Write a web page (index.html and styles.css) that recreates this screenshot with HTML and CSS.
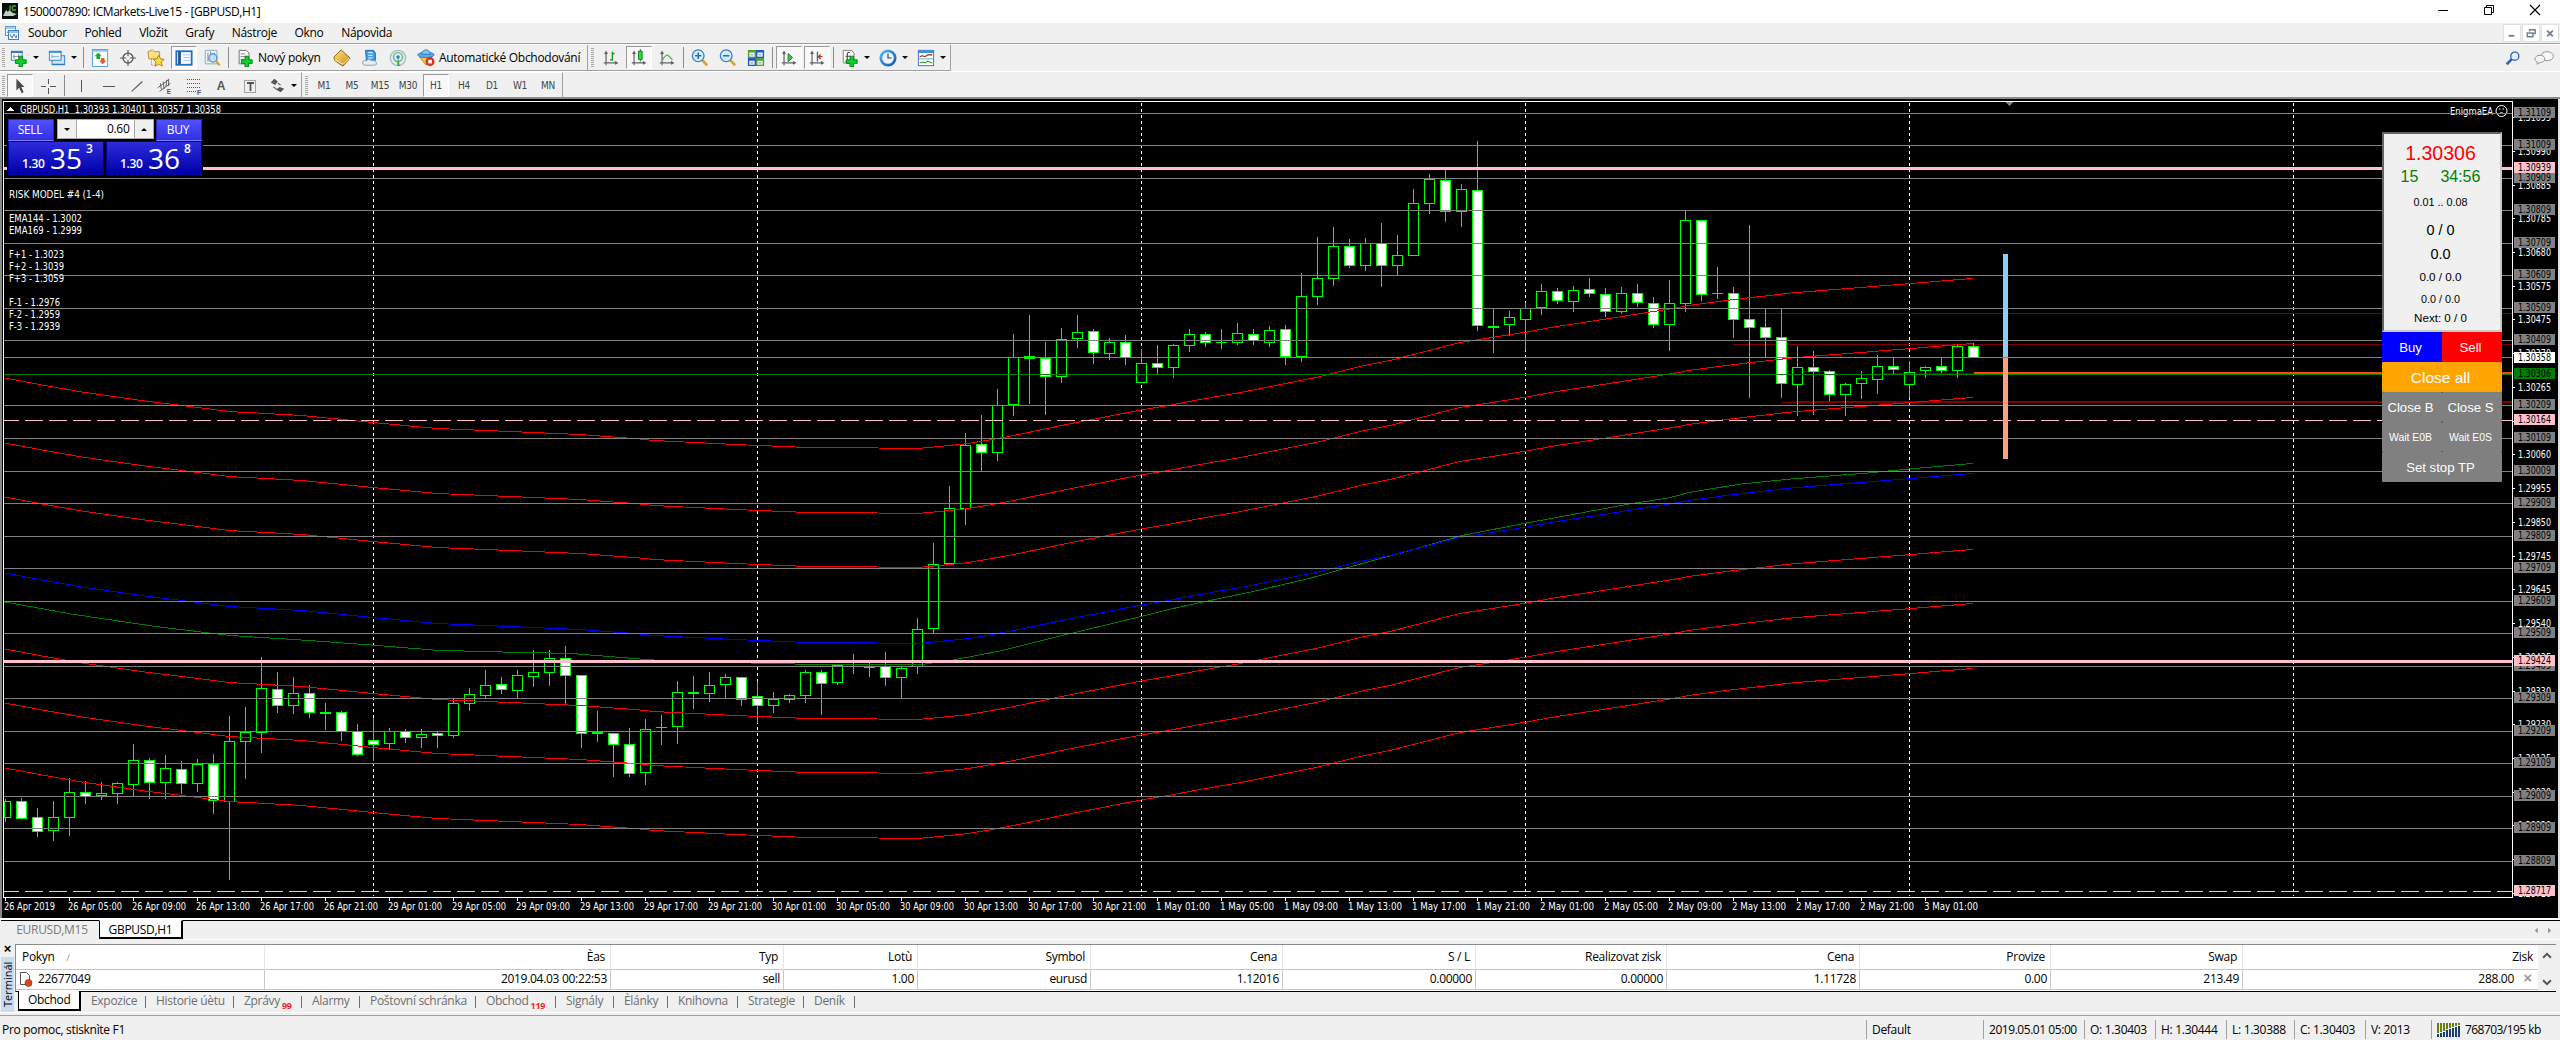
FILE: index.html
```html
<!DOCTYPE html>
<html lang="cs">
<head>
    <meta charset="UTF-8">
    <title>1500007890: ICMarkets-Live15 - [GBPUSD,H1]</title>
    <link rel="stylesheet" href="styles.css">
</head>
<body>
<svg class="defs">
    <defs>
        <linearGradient id="gold" x1="0" y1="0" x2="1" y2="1"><stop offset="0" stop-color="#ffe680"/><stop offset="1" stop-color="#c98a10"/></linearGradient>
        <linearGradient id="blue" x1="0" y1="0" x2="1" y2="1"><stop offset="0" stop-color="#5ab4f5"/><stop offset="1" stop-color="#0a55b0"/></linearGradient>
        <g id="plus"><path d="M10 8h4v4h4v4h-4v4h-4v-4H6v-4h4z" fill="#0bd02c" stroke="#067a18"/></g>
        <g id="axes"><path d="M4.500 3v15M2 15.500h15M3 5.500l1.500-2.500 1.500 2.500M14.500 14l2.500 1.500-2.500 1.500" fill="none" stroke="#606060" stroke-width="1.300"/></g>
    </defs>
</svg>

<div class="title-bar">
    <svg class="app-icon" viewBox="0 0 16 16"><rect width="16" height="16" fill="#0b0f0b"/><path d="M1 13l3-6 2 2 1-2 4 3 4 1-4 2z" fill="#c5cbc5"/><path d="M8 2.500v5M14 3h-3l-1 2 1 2h3" fill="none" stroke="#4e9a2e" stroke-width="1.500"/></svg>
    <span class="caption">1500007890: ICMarkets-Live15 - [GBPUSD,H1]</span>
    <div class="win-btns">
        <svg viewBox="0 0 46 22"><path d="M18 10.500h10" stroke="#000"/></svg>
        <svg viewBox="0 0 46 22"><path d="M18.500 7.500h7v7h-7zM20.500 7.500v-2h7v7h-2" fill="none" stroke="#000"/></svg>
        <svg viewBox="0 0 46 22"><path d="M18 5l10 10M28 5l-10 10" stroke="#000" stroke-width="1.200"/></svg>
    </div>
</div>

<div class="menu-bar">
    <svg class="menu-icon" viewBox="0 0 16 16"><rect x="1.500" y="1.500" width="10" height="9" fill="#fff" stroke="#5b9bd5"/><path d="M1 3h11M3 8l2-3 2 3" stroke="#5b9bd5" fill="none"/><rect x="4.500" y="5.500" width="10" height="9" fill="#fff" stroke="#3c7fd0"/><path d="M4 7h11M6 9l2 4 2-4 2 4 1-3" stroke="#3c7fd0" fill="none"/></svg>
    <span>Soubor</span><span>Pohled</span><span>Vložit</span><span>Grafy</span><span>Nástroje</span><span>Okno</span><span>Nápovìda</span>
    <div class="mdi-btns">
        <svg viewBox="0 0 17 17"><path d="M5 11.500h6" stroke="#6f8196" stroke-width="2"/></svg>
        <svg viewBox="0 0 17 17"><path d="M4.500 8.500h6v4h-6zM7 7V5h6v4h-2" fill="none" stroke="#6f8196" stroke-width="1.500"/></svg>
        <svg viewBox="0 0 17 17"><path d="M5.500 6l6 6M11.500 6l-6 6" stroke="#6f8196" stroke-width="2"/></svg>
    </div>
</div>

<div class="toolbar">
    <div class="tool-group">
        <i class="grip"></i>
        <span class="tool"><svg viewBox="0 0 20 20"><rect x="1.500" y="2.500" width="12" height="10" fill="#fff" stroke="#2b7bc8"/><path d="M1 3.500h13" stroke="#2b7bc8" stroke-width="2"/><path d="M4.500 6v5M3 8.500h8M9.500 6v5" stroke="#888"/><use href="#plus"/></svg></span><i class="drop"></i>
        <span class="tool"><svg viewBox="0 0 20 20"><rect x="4.500" y="7.500" width="14" height="10" fill="#cfe6fa" stroke="#2b7bc8"/><rect x="1.500" y="2.500" width="13" height="10" fill="#eef6fd" stroke="#2b7bc8"/><path d="M1 3.500h14M5 17h13" stroke="#2b7bc8" stroke-width="1.500"/><path d="M4.500 6v4M4 8.500h8" stroke="#7ab"/></svg></span><i class="drop"></i>
        <i class="sep"></i>
        <span class="tool"><svg viewBox="0 0 20 20"><rect x="1.500" y=".5" width="17" height="19" fill="#fff" stroke="#4d9be0"/><path d="M2 2h16" stroke="#8cc3f0" stroke-width="2"/><path d="M8 4l4 4h-2v3H6V8H4z" fill="#1fae2c"/><path d="M13 17l-4-4h2v-3h4v3h2z" fill="#ef5a2a"/></svg></span>
        <span class="tool"><svg viewBox="0 0 20 20"><circle cx="10" cy="10" r="5.500" fill="none" stroke="#5a5a5a" stroke-width="1.500"/><path d="M10 1v7M10 12v7M1 10h7M12 10h7" stroke="#5a5a5a" stroke-width="1.200"/></svg></span>
        <span class="tool"><svg viewBox="0 0 20 20"><path d="M1 3l5-2 2 2h6v8H2z" fill="#f8e08a" stroke="#b98d20"/><path d="M5 11v7h5" stroke="#777" fill="none" stroke-dasharray="1 1"/><path d="M13 7l2 4 4 .5-3 3 1 4.500-4-2-4 2 1-4.500-3-3 4-.5z" fill="#ffdc3c" stroke="#b07a10"/></svg></span>
        <span class="tool on"><svg viewBox="0 0 20 20"><rect x="1.500" y="2.500" width="17" height="15" fill="#fff" stroke="#1d6fc0" stroke-width="2"/><path d="M5 3v14" stroke="#1d4f90" stroke-width="3"/><path d="M9 6.500h8M9 9.500h8M9 12.500h8" stroke="#9bf"/></svg></span>
        <span class="tool"><svg viewBox="0 0 20 20"><path d="M2.500 1.500h13v15h-13z" fill="#eef5fb" stroke="#7fa6c8"/><path d="M5.500 4v10M8.500 3v9M12.500 4v8" stroke="#6f7f8f"/><circle cx="11" cy="10" r="4.500" fill="#bfe0fa" fill-opacity=".8" stroke="#4d8fcc" stroke-width="1.400"/><path d="M14.500 13.500l4 4.500" stroke="#d9a62a" stroke-width="2.500"/></svg></span>
        <i class="sep"></i>
        <span class="tool wide new-order"><svg viewBox="0 0 20 20"><path d="M3.500 1.500h8l3 3v12h-11z" fill="#fff" stroke="#666"/><path d="M5 5.500h5M5 8.500h7M5 11.500h4" stroke="#777"/><use href="#plus"/></svg><b>Nový pokyn</b></span>
        <span class="tool"><svg viewBox="0 0 20 20"><path d="M1 9l8-8 10 9-8 9-9-6z" fill="url(#gold)" stroke="#8a5a08"/><path d="M2 12l9 5 7-7" stroke="#fff3c0" fill="none"/></svg></span>
        <span class="tool"><svg viewBox="0 0 20 20"><path d="M5 1.500h9l2 3v8H6z" fill="#3a9ff0" stroke="#1267b8"/><path d="M8 4h5M8 7h5M8 10h5" stroke="#fff"/><path d="M4 18q-3-1-2-4 2-2 4-1 3-3 6 0 4-1 5 2 1 3-2 3z" fill="#e7eef6" stroke="#7f96b5"/></svg></span>
        <span class="tool"><svg viewBox="0 0 20 20"><circle cx="10" cy="10" r="8.500" fill="#e3efe6" stroke="#9cc0cc" stroke-width="1.500"/><circle cx="10" cy="9" r="5" fill="none" stroke="#6fae8c" stroke-width="1.500"/><path d="M10 9l2 10H9z" fill="#2fae3c"/><circle cx="10" cy="9" r="2" fill="#3a7fd0"/></svg></span>
        <span class="tool wide auto"><svg viewBox="0 0 20 20"><path d="M3 9l7 9 6-3V8z" fill="#f2c64a" stroke="#b8860b"/><ellipse cx="10" cy="6.500" rx="9" ry="3" fill="#59ade8" stroke="#2a78b8"/><path d="M5 6q1-5 5-5t5 5z" fill="#7cc4f2" stroke="#2a78b8"/><circle cx="14.500" cy="14" r="5" fill="#d9301a"/><rect x="12.500" y="12" width="4" height="4" fill="#fff"/></svg><b>Automatické Obchodování</b></span>
    </div>
    <div class="tool-group">
        <i class="grip"></i>
        <span class="tool"><svg viewBox="0 0 20 20"><use href="#axes"/><path d="M11.500 3v10M9 12h2.500M11.500 5H14" stroke="#149a20" stroke-width="1.500"/></svg></span>
        <span class="tool on"><svg viewBox="0 0 20 20"><use href="#axes"/><path d="M11.500 0v14" stroke="#0a7a14"/><rect x="9.500" y="2.500" width="4" height="9" fill="#35d845" stroke="#0a7a14"/></svg></span>
        <span class="tool"><svg viewBox="0 0 20 20"><use href="#axes"/><path d="M5 12q4-6 6-5t5 5" fill="none" stroke="#4fb05a" stroke-width="1.500"/></svg></span>
        <i class="sep"></i>
        <span class="tool"><svg viewBox="0 0 20 20"><path d="M12 12l6 6" stroke="#d9a62a" stroke-width="3"/><circle cx="8" cy="7.500" r="6.500" fill="#d6edfc" stroke="#3484cc" stroke-width="1.500"/><path d="M4.500 7.500h7M8 4v7" stroke="#2a6fb8" stroke-width="1.800"/></svg></span>
        <span class="tool"><svg viewBox="0 0 20 20"><path d="M12 12l6 6" stroke="#d9a62a" stroke-width="3"/><circle cx="8" cy="7.500" r="6.500" fill="#d6edfc" stroke="#3484cc" stroke-width="1.500"/><path d="M4.500 7.500h7" stroke="#2a6fb8" stroke-width="1.800"/></svg></span>
        <span class="tool"><svg viewBox="0 0 20 20"><path d="M1 1h9v9H1zM10 10h9v9h-9z" fill="#4aa52a"/><path d="M10 1h9v9h-9zM1 10h9v9H1z" fill="#2557c8"/><path d="M2.500 4h6v4.500h-6zM11.500 4h6v4.500h-6zM2.500 13h6v4.500h-6zM11.500 13h6v4.500h-6z" fill="#e9f2ff"/><path d="M4 6.500h3M13 6.500h3M4 15.500h3M13 15.500h3" stroke="#88a"/></svg></span>
        <i class="sep"></i>
        <span class="tool on"><svg viewBox="0 0 20 20"><use href="#axes"/><path d="M9 5l5 4.500-5 4.500z" fill="#3cc84a" stroke="#0a7a14"/></svg></span>
        <span class="tool on"><svg viewBox="0 0 20 20"><use href="#axes"/><path d="M10.500 3v11" stroke="#2a6fb8" stroke-width="1.500"/><path d="M16 8.500h-4M14 6l-2.500 2.500L14 11" stroke="#b8391a" stroke-width="1.500" fill="none"/></svg></span>
        <i class="sep"></i>
        <span class="tool"><svg viewBox="0 0 20 20"><path d="M2.500 1.500h9l3 3v11h-12z" fill="#fff" stroke="#777"/><path d="M10 4q-3-1-3 2v6q0 2-2 2M5 8h5" fill="none" stroke="#444" stroke-width="1.200"/><use href="#plus"/></svg></span><i class="drop"></i>
        <span class="tool"><svg viewBox="0 0 20 20"><circle cx="10" cy="10" r="8" fill="#eaf4fd" stroke="url(#blue)" stroke-width="3"/><path d="M10 5v5h4" stroke="#345" fill="none" stroke-width="1.300"/></svg></span><i class="drop"></i>
        <span class="tool"><svg viewBox="0 0 20 20"><rect x="1.500" y="1.500" width="17" height="17" fill="#fff" stroke="#2b6fb8"/><path d="M1 3h18" stroke="#3f8edc" stroke-width="3"/><path d="M3 8.500l3-1 3 1 3-2h5" stroke="#8a2a1a" fill="none" stroke-width="1.300"/><path d="M2 11h16" stroke="#59c"/><path d="M3 15.500l3-1 3 1 3-2 2 1 3 1" stroke="#2a9a3a" fill="none" stroke-width="1.300"/></svg></span><i class="drop"></i>
    </div>
    <div class="right-tools">
        <svg viewBox="0 0 20 20"><path d="M3 17l6-6" stroke="#2f63c8" stroke-width="3"/><circle cx="12" cy="8" r="4.500" fill="#eaf3ff" stroke="#2f63c8" stroke-width="1.500"/></svg>
        <svg class="chat" viewBox="0 0 24 20"><ellipse cx="16" cy="8" rx="7" ry="5" fill="#f8f8f8" stroke="#8a8a8a"/><ellipse cx="8" cy="11" rx="5.500" ry="4" fill="#f8f8f8" stroke="#8a8a8a"/><path d="M5 14v3l3-2" fill="#fff" stroke="#8a8a8a"/></svg>
    </div>
</div>

<div class="toolbar second">
    <div class="tool-group">
        <i class="grip narrow"></i>
        <span class="tool on"><svg viewBox="0 0 20 20"><path d="M6 2v13l3-3 3 6 2-1-2.500-6H15z" fill="#4a4a4a"/></svg></span>
        <span class="tool"><svg viewBox="0 0 18 18"><path d="M9.500 2v5M9.500 11v6M2 9.500h5M11 9.500h6" stroke="#555"/></svg></span>
        <i class="sep"></i>
        <span class="tool"><svg viewBox="0 0 18 18"><path d="M9.500 3v12" stroke="#555"/></svg></span>
        <span class="tool"><svg viewBox="0 0 18 18"><path d="M3 9.500h12" stroke="#555"/></svg></span>
        <span class="tool"><svg viewBox="0 0 20 20"><path d="M4 16L16 5" stroke="#555" stroke-width="1.200"/></svg></span>
        <span class="tool"><svg viewBox="0 0 20 20"><path d="M2 12L14 3M4 16L16 7M5 7l1 7M8 5l1 8M12 3l-1 8M14 2v8" stroke="#555"/><text x="12" y="19" class="glyph">E</text></svg></span>
        <span class="tool"><svg viewBox="0 0 18 18"><path d="M3 2.500h14M3 6.500h14M3 10.500h14M3 14.500h9" stroke="#555" stroke-dasharray="1 1"/><text x="13" y="18" class="glyph">F</text></svg></span>
        <span class="tool letter">A</span>
        <span class="tool"><svg viewBox="0 0 18 18"><rect x="4.500" y="3.500" width="11" height="12" fill="none" stroke="#555" stroke-dasharray="1 1"/><path d="M7 6h7M10.500 6v8" stroke="#555" stroke-width="1.800"/></svg></span>
        <span class="tool"><svg viewBox="0 0 20 20"><path d="M3 6l4-4 4 3-3 4zM9 14l4-3 5 2-4 4z" fill="#555"/><path d="M6 11l4 3M11 7l3 2" stroke="#555" stroke-width="1.200"/></svg></span><i class="drop"></i>
    </div>
    <div class="tool-group periods">
        <i class="grip"></i>
        <span class="tool">M1</span><span class="tool">M5</span><span class="tool">M15</span><span class="tool">M30</span><span class="tool on">H1</span><span class="tool">H4</span><span class="tool">D1</span><span class="tool">W1</span><span class="tool">MN</span>
    </div>
</div>

<div class="chart-window">
    <svg id="chart" class="chart" viewBox="0 99 2560 819" width="2560" height="819"></svg>

    <div class="one-click">
        <div class="row">
            <div class="side">SELL</div>
            <div class="lots"><i class="arrow down"></i><span>0.60</span><i class="arrow up"></i></div>
            <div class="side">BUY</div>
        </div>
        <div class="row">
            <div class="quote"><small>1.30</small><strong>35</strong><sup>3</sup></div>
            <div class="quote"><small>1.30</small><strong>36</strong><sup>8</sup></div>
        </div>
    </div>

    <div class="ea-panel">
        <div class="ea-info">
            <p class="price">1.30306</p>
            <p class="timer"><span>15</span><span>34:56</span></p>
            <p class="range">0.01 .. 0.08</p>
            <p class="count">0 / 0</p>
            <p class="total">0.0</p>
            <p class="sum">0.0 / 0.0</p>
            <p class="sum small">0.0 / 0.0</p>
            <p class="next">Next: 0 / 0</p>
        </div>
        <div class="ea-btns">
            <span class="buy">Buy</span><span class="sell">Sell</span>
            <span class="close-all">Close all</span>
            <span>Close B</span><span>Close S</span>
            <span class="wait">Wait E0B</span><span class="wait">Wait E0S</span>
            <span class="full">Set stop TP</span>
        </div>
    </div>
</div>

<div class="chart-tabs">
    <span>EURUSD,M15</span>
    <span class="active">GBPUSD,H1</span>
    <svg viewBox="0 0 30 10"><path d="M6 1v8L2 5zM21 1v8l4-4z" fill="#8a8a8a"/></svg>
</div>

<div class="terminal">
    <div class="terminal-side"><i>×</i><span>Terminál</span></div>
    <div class="terminal-main">
        <div class="orders">
            <div class="orders-row head">
                <span class="first">Pokyn <em>/</em></span><span>Èas</span><span>Typ</span><span>Lotù</span><span>Symbol</span><span>Cena</span><span>S / L</span><span>Realizovat zisk</span><span>Cena</span><span>Provize</span><span>Swap</span><span>Zisk</span>
            </div>
            <div class="orders-row">
                <span class="first"><svg viewBox="0 0 14 16"><path d="M1.500 1.500h6l3 3v9h-9z" fill="#fff" stroke="#555"/><circle cx="9.500" cy="12" r="3.500" fill="#e0441a" stroke="#9a2408" stroke-width=".6"/></svg>22677049</span><span>2019.04.03 00:22:53</span><span>sell</span><span>1.00</span><span>eurusd</span><span>1.12016</span><span>0.00000</span><span>0.00000</span><span>1.11728</span><span>0.00</span><span>213.49</span><span>288.00<i class="del">×</i></span>
            </div>
            <svg class="scroll" viewBox="0 0 18 46"><path d="M5 13l4-4 4 4M5 36l4 4 4-4" fill="none" stroke="#555" stroke-width="2"/></svg>
        </div>
        <div class="terminal-tabs" id="tabs"></div>
    </div>
</div>

<div class="status-bar">
    <span class="help">Pro pomoc, stisknìte F1</span>
    <span class="profile">Default</span>
    <span class="time">2019.05.01 05:00</span>
    <span class="o">O: 1.30403</span>
    <span class="h">H: 1.30444</span>
    <span class="l">L: 1.30388</span>
    <span class="c">C: 1.30403</span>
    <span class="v">V: 2013</span>
    <span class="net"><svg id="net" viewBox="0 0 24 14"></svg>768703/195 kb</span>
</div>

<script>
    var NS = "http://www.w3.org/2000/svg";
    var svg = document.getElementById("chart");

    function el(name, attrs, parent) {
        var e = document.createElementNS(NS, name);
        for (var k in attrs) e.setAttribute(k, attrs[k]);
        (parent || svg).appendChild(e);
        return e;
    }
    function hline(x1, x2, y, cls, w) {
        el("rect", {x: x1, y: y, width: x2 - x1, height: w || 1, "class": cls});
    }
    function text(x, y, str, cls, len) {
        var t = el("text", {x: x, y: y, "class": cls || "txt"});
        if (len) {
            t.setAttribute("textLength", len);
            t.setAttribute("lengthAdjust", "spacingAndGlyphs");
        }
        t.textContent = str;
    }

    var LEFT = 4, RIGHT = 2512, TOP = 101, BOTTOM = 897;

    // [high, body top, body bottom, low, bearish]
    var candles = [
        [799,801,817,821,0],[798,801,818,818,1],[808,817,831,836,1],[801,817,830,840,0],[778,792,817,835,0],
        [781,792,796,803,1],[782,793,795,799,0],[782,783,793,803,0],[744,760,784,795,0],[758,760,782,798,1],
        [755,768,782,798,0],[761,769,783,793,1],[759,764,783,791,0],[754,764,800,813,1],[716,741,801,879,0],
        [707,732,741,778,0],[657,688,732,752,0],[672,689,705,712,1],[677,693,705,713,0],[685,693,712,717,1],
        [703,712,713,729,0],[711,712,731,740,1],[724,731,754,755,1],[718,740,744,760,1],[728,731,743,749,0],
        [729,731,737,742,1],[729,734,737,747,0],[732,733,735,747,1],[699,703,735,737,0],[688,694,703,710,0],
        [670,685,695,697,0],[677,684,689,693,1],[670,675,690,698,0],[650,672,676,686,0],[650,658,672,685,0],
        [646,658,675,704,1],[675,675,733,747,1],[711,732,733,741,0],[733,733,744,776,1],[728,744,773,776,1],
        [719,729,772,784,0],[715,727,727,744,0],[681,692,726,743,0],[676,692,693,708,0],[672,685,693,701,0],
        [674,677,684,698,0],[677,677,699,705,1],[681,696,705,722,1],[692,699,705,712,0],[694,695,699,702,0],
        [670,672,695,702,0],[670,672,683,714,1],[665,665,682,684,0],[654,661,661,673,0],[663,667,667,676,0],
        [652,666,677,685,1],[666,668,677,698,0],[618,629,666,673,0],[543,564,628,632,0],[486,508,563,563,0],
        [433,445,508,524,0],[415,444,452,470,1],[389,405,452,460,0],[334,357,404,415,0],[315,356,358,403,1],
        [342,358,376,414,1],[328,339,376,382,0],[315,332,338,347,0],[329,331,352,363,1],[338,342,353,359,0],
        [335,342,357,364,1],[349,363,382,382,0],[345,363,367,374,1],[344,345,367,377,0],[329,334,345,351,0],
        [332,334,342,346,1],[329,342,342,348,0],[323,333,342,344,0],[329,334,340,344,1],[326,330,342,346,0],
        [325,329,356,364,1],[273,296,356,361,0],[237,278,296,304,0],[227,246,278,285,0],[239,246,265,267,1],
        [238,243,265,270,0],[223,243,265,286,1],[235,255,265,274,0],[189,203,255,255,0],[174,179,203,213,0],
        [168,180,211,221,1],[184,189,211,226,0],[141,190,325,330,1],[309,326,327,352,1],[311,317,324,335,0],
        [303,308,319,350,0],[284,291,307,314,0],[288,291,300,303,1],[286,290,301,311,0],[278,289,293,296,1],
        [288,294,311,316,1],[287,293,311,313,0],[284,293,302,306,1],[297,303,324,327,1],[280,303,324,350,0],
        [210,220,303,311,0],[220,220,294,300,1],[267,293,293,298,0],[287,293,319,337,1],[225,319,327,397,1],
        [309,327,337,356,1],[308,337,383,397,1],[346,367,384,415,0],[351,367,371,414,1],[370,371,394,400,1],
        [383,384,394,415,0],[371,378,383,398,0],[355,366,379,393,0],[357,366,369,373,1],[361,372,384,397,0],
        [366,367,370,377,0],[357,366,370,372,1],[344,346,370,377,0],[343,346,357,357,1]
    ];
    var ema169 = [[5,573],[45,580.500],[85,587.500],[149,596.500],[190,601.500],[229,606.500],[302,610.500],[373,617.500],[437,623.500],[510,626.500],[580,629.500],[640,634],[654,635.500],[735,639.500],[816,642.800],[878,643],[910,643.900],[926,642.800],[967,638.700],[1008,631.700],[1069,619],[1141,605],[1171,600],[1200,594.500],[1240,587.600],[1315,572.700],[1363,560.700],[1389,555.700],[1419,548],[1460,537.500],[1525,527.300],[1552,522.300],[1608,513.700],[1674,503.300],[1690,500.300],[1730,495],[1794,487.700],[1909,478.700],[1973,473.400]];
    var ema144 = [[5,602],[73,614.300],[155,626.400],[229,635.400],[306,640.300],[371,645],[437,650.300],[526,652.600],[569,653.300],[640,659],[654,660],[767,663.500],[816,664.400],[922,664.400],[953,660],[1000,651],[1049,638.700],[1141,616.500],[1171,609],[1200,602.600],[1251,592],[1310,578.300],[1363,563.300],[1414,549.300],[1463,535.300],[1525,523.300],[1633,503.300],[1667,498.300],[1690,492.300],[1741,484],[1794,478.700],[1833,475.700],[1868,473],[1909,469],[1973,463.400]];

    // day separators
    for (var x = 373; x < RIGHT; x += 384) {
        el("line", {x1: x + .5, x2: x + .5, y1: 103, y2: 896, "class": "day"});
    }
    // support and resistance left by the EA
    hline(1739, RIGHT, 313, "maroon");
    hline(1733, RIGHT, 344, "maroon");
    hline(1781, 1827, 371, "maroon");
    hline(1883, RIGHT, 373, "maroon");
    hline(1781, 1798, 402, "maroon");
    hline(1797, RIGHT, 401, "maroon", 2);

    candles.forEach(function (c, i) {
        var cx = 5 + 16 * i;
        var left = Math.max(cx - 5, LEFT);
        el("rect", {x: cx, y: c[0], width: 1, height: c[3] - c[0] + 1, "class": "wick"});
        if (c[2] - c[1] < 2) {
            el("rect", {x: left, y: c[1], width: cx + 6 - left, height: c[2] - c[1] + 1, "class": "wick"});
        } else {
            el("rect", {x: left + .5, y: c[1] + .5, width: cx + 5 - left, height: c[2] - c[1], "class": c[4] ? "bear" : "bull"});
        }
    });

    function curve(pts, dy, cls) {
        el("polyline", {points: pts.map(function (p) { return p[0] + "," + (p[1] + dy); }).join(" "), "class": "curve " + cls});
    }
    [-195, -130, -76, 76, 130, 195].forEach(function (d) { curve(ema169, d, "red"); });
    curve(ema144, 0, "green");
    curve(ema169, 0, "blue");

    text(20, 113, "GBPUSD,H1  1.30393 1.30401 1.30357 1.30358", "txt", 201);
    el("path", {d: "M7 111h7l-3.500-4z", fill: "#fff"});
    text(2450, 115, "EnigmaEA", "txt", 43);
    el("circle", {cx: 2501.500, cy: 111, r: 5.500, "class": "face"});
    el("path", {d: "M2498.500 114q3-3 6 0M2499 109h1.500M2502.500 109h1.500", "class": "face"});

    // hundred point grid, 1.30309 is taken by the EA level
    var levels = [113,145,178,210,243,275,308,340,null,405,438,471,503,536,568,601,633,666,698,731,763,796,828,861];
    levels.forEach(function (y) { if (y) hline(LEFT, RIGHT, y, "grid"); });
    hline(LEFT, RIGHT, 357, "bid");
    hline(LEFT, RIGHT, 167, "pink", 3);
    hline(LEFT, RIGHT, 660, "pink", 3);
    [420, 891].forEach(function (y) {
        el("line", {x1: LEFT, x2: RIGHT, y1: y + .5, y2: y + .5, "class": "pink-dash"});
    });
    hline(LEFT, RIGHT, 374, "green-fill");
    hline(1974, RIGHT, 372, "orange", 2);
    el("rect", {x: 2003, y: 254, width: 5, height: 103, fill: "#87cefa"});
    el("rect", {x: 2003, y: 358, width: 5, height: 101, fill: "#ffa07a"});
    el("path", {d: "M2005 102h8l-4 4z", fill: "#808080"});

    // comment
    [["RISK MODEL #4 (1-4)", 198, 95], ["EMA144 - 1.3002", 222, 73], ["EMA169 - 1.2999", 234, 73],
     ["F+1 - 1.3023", 258, 55], ["F+2 - 1.3039", 270, 55], ["F+3 - 1.3059", 282, 55],
     ["F-1 - 1.2976", 306, 51], ["F-2 - 1.2959", 318, 51], ["F-3 - 1.2939", 330, 51]].forEach(function (r) {
        text(9, r[1], r[0], "txt", r[2]);
    });

    // frame and axes
    hline(LEFT - 1, RIGHT + 1, TOP, "white");
    hline(LEFT - 1, RIGHT + 1, BOTTOM, "white");
    el("rect", {x: 3, y: TOP, width: 1, height: BOTTOM - TOP, "class": "white"});
    el("rect", {x: RIGHT, y: TOP, width: 1, height: BOTTOM - TOP, "class": "white"});

    var scale = {1.31095: 117, 1.30990: 151, 1.30885: 185, 1.30785: 218, 1.30680: 252, 1.30575: 286, 1.30475: 319,
        1.30370: 353, 1.30265: 387, 1.30160: 421, 1.30060: 454, 1.29955: 488, 1.29850: 522, 1.29745: 556, 1.29645: 589,
        1.29540: 623, 1.29435: 657, 1.29330: 691, 1.29230: 724, 1.29125: 758, 1.29020: 792, 1.28920: 825, 1.28815: 859, 1.28710: 893};
    for (var p in scale) {
        hline(RIGHT, RIGHT + 3, scale[p], "white");
        text(2518, scale[p] + 4, (+p).toFixed(5), "txt", 33);
    }
    function tag(y, price, cls) {
        el("rect", {x: 2514, y: y, width: 41, height: 11, "class": cls});
        text(2518, y + 9, price, "tag", 33);
    }
    levels.forEach(function (y, i) {
        if (y) tag(y - 6, (1.31109 - i * .001).toFixed(5), "grid");
    });
    tag(162, "1.30939", "pink");
    tag(352, "1.30358", "white");
    tag(368, "1.30306", "green-fill");
    tag(414, "1.30164", "pink");
    tag(655, "1.29424", "pink");
    tag(885, "1.28717", "pink");

    ["26 Apr", "29 Apr", "30 Apr", "1 May", "2 May", "3 May"].forEach(function (day, d) {
        ["01:00", "05:00", "09:00", "13:00", "17:00", "21:00"].forEach(function (hour, h) {
            var n = d * 6 + h;
            if (n > 30) return;
            var label = n === 0 ? "26 Apr 2019" : day + " " + hour;
            el("rect", {x: 5 + 64 * n, y: 898, width: 1, height: 3, "class": "white"});
            text(4 + 64 * n, 910, label, "txt", n === 0 ? 51 : 54);
        });
    });

    // terminal tabs: title, width, badge
    var tabs = [["Obchod", 63], ["Expozice", 65], ["Historie úètu", 88], ["Zprávy", 68, "99"], ["Alarmy", 58], ["Poštovní schránka", 116],
        ["Obchod", 80, "119"], ["Signály", 58], ["Èlánky", 54], ["Knihovna", 70], ["Strategie", 66], ["Deník", 51]];
    tabs.forEach(function (t, i) {
        var s = document.createElement("span");
        s.textContent = t[0];
        s.style.width = t[1] + "px";
        if (i === 0) s.className = "active";
        if (t[2]) {
            var b = document.createElement("sub");
            b.textContent = t[2];
            s.appendChild(b);
        }
        document.getElementById("tabs").appendChild(s);
    });

    // connection bars
    for (var i = 0; i < 8; i++) {
        var h = 3 + Math.round(i * 1.200);
        el("rect", {x: i * 3, y: 0, width: 2, height: 13 - h, fill: "#6b7f10"}, document.getElementById("net"));
        el("rect", {x: i * 3, y: 14 - h, width: 2, height: h, fill: "#17406b"}, document.getElementById("net"));
    }
</script>
</body>
</html>
```
FILE: styles.css
```css
*{
    margin: 0;
    padding: 0;
    box-sizing: border-box;
}
body{
    width: 2560px;
    height: 1040px;
    overflow: hidden;
    display: flex;
    flex-direction: column;
    background-color: #f0f0f0;
    color: #000;
    font-family: "Open Sans", "Noto Sans", sans-serif;
    font-size: 12px;
    letter-spacing: -0.3px;
}
i, em{
    font-style: normal;
}
.defs{
    position: absolute;
    width: 0;
    height: 0;
}

/* title */
.title-bar{
    display: flex;
    align-items: center;
    height: 23px;
    background-color: #fff;
}
.app-icon{
    width: 16px;
    height: 16px;
    margin: 0 5px 1px 2px;
}
.caption{
    letter-spacing: -0.43px;
}
.win-btns{
    display: flex;
    height: 23px;
    margin-left: auto;
    margin-right: 2px;
}
.win-btns svg{
    width: 46px;
    height: 22px;
}

/* menu */
.menu-bar{
    display: flex;
    align-items: center;
    height: 21px;
    padding-left: 4px;
    padding-bottom: 1px;
    border-bottom: 1px solid #a0a0a0;
}
.menu-bar span{
    margin-right: 17.6px;
    white-space: nowrap;
}
.menu-icon{
    width: 16px;
    height: 16px;
    margin-right: 8px;
}
.mdi-btns{
    display: flex;
    gap: 1px;
    margin-left: auto;
    margin-right: 1px;
}
.mdi-btns svg{
    width: 18px;
    height: 18px;
    background-color: #fff;
    border: 1px solid #e0e0e0;
}

/* toolbars */
.toolbar{
    display: flex;
    height: 27px;
    border-top: 1px solid #fff;
}
.toolbar.second{
    height: 28px;
    border-bottom: 2px solid #8a8a8a;
}
.tool-group{
    display: flex;
    align-items: center;
    height: 26px;
    border-right: 1px solid #a0a0a0;
    border-bottom: 1px solid #a0a0a0;
}
.second .tool-group{
    border-bottom: none;
    border-top: 1px solid #fff;
}
.grip{
    width: 9px;
    height: 20px;
    background: repeating-linear-gradient(#a8a8a8 0 1px, #f0f0f0 1px 2px) 3px 0 / 3px 20px no-repeat;
}
.tool-group:first-child .grip{
    width: 5px;
    background-position: 2px 0;
}
.tool-group:first-child .narrow{
    width: 6px;
}
.periods .grip{
    width: 8px;
}
.tool{
    display: flex;
    align-items: center;
    justify-content: center;
    width: 28px;
    height: 23px;
}
.tool svg{
    width: 18px;
    height: 18px;
    flex: none;
}
.tool.on{
    width: 26px;
    margin: 0 1px;
    background-color: #f8f8f8;
    border: 1px solid #fff;
    border-top-color: #9a9a9a;
    border-left-color: #9a9a9a;
}
.tool.wide{
    justify-content: flex-start;
    padding-left: 5px;
}
.tool.wide b{
    font-weight: normal;
    margin-left: 4px;
    white-space: nowrap;
}
.new-order{
    width: 97px;
}
.auto{
    width: 175px;
}
.drop{
    width: 6px;
    margin: 0 4px 0 0;
    border: 3px solid transparent;
    border-top-color: #000;
    border-bottom: none;
}
.sep{
    width: 1px;
    height: 21px;
    margin: 0 2px;
    background-color: #8c8c8c;
}
.letter{
    font: bold 12px "Liberation Sans", sans-serif;
    color: #555;
}
.glyph{
    font: bold 7px "Liberation Sans", sans-serif;
    fill: #555;
}
.periods .tool{
    font: 10px "DejaVu Sans Condensed", "Noto Sans", sans-serif;
    color: #444;
}
.right-tools{
    display: flex;
    align-items: center;
    gap: 10px;
    margin-left: auto;
    margin-right: 5px;
}
.right-tools svg{
    width: 18px;
    height: 18px;
}
.right-tools .chat{
    width: 23px;
}

/* chart */
.chart-window{
    position: relative;
    height: 819px;
    background-color: #000;
    border-left: 2px solid #8a8a8a;
    border-right: 2px solid #e3e3e3;
}
.chart{
    display: block;
    margin-left: -2px;
    shape-rendering: crispEdges;
}
.txt, .tag{
    font: 10px "DejaVu Sans Condensed", "Noto Sans", sans-serif;
    fill: #fff;
    white-space: pre;
    letter-spacing: 0;
}
.tag{
    fill: #000;
}
.grid{ fill: #808080; }
.bid{ fill: #778899; }
.pink{ fill: #ffc0cb; }
.white{ fill: #fff; }
.maroon{ fill: #800000; }
.orange{ fill: #ff4500; }
.green-fill{ fill: #008000; }
.wick{ fill: #00ff00; }
.bull{
    fill: #000;
    stroke: #00ff00;
}
.bear{
    fill: #fff;
    stroke: #00ff00;
}
.day{
    stroke: #fff;
    stroke-dasharray: 3 3;
}
.pink-dash{
    stroke: #ffc0cb;
    stroke-dasharray: 18 6;
    stroke-dashoffset: 3;
}
.curve{
    fill: none;
    stroke-width: 1;
}
.curve.red{ stroke: #ff0000; }
.curve.blue{ stroke: #0000ff; }
.curve.green{ stroke: #008000; }
.face{
    fill: none;
    stroke: #fff;
    shape-rendering: auto;
}

/* one click trading, floats over the chart */
.one-click{
    position: absolute;
    left: 5px;
    top: 19px;
    width: 196px;
    padding: 1px;
    background-color: #000;
    color: #fff;
    display: flex;
    flex-direction: column;
}
.one-click .row{
    display: flex;
    justify-content: space-between;
}
.side{
    width: 46px;
    height: 22px;
    background: linear-gradient(#5050ff, #3030e2);
    line-height: 20px;
    text-align: center;
    padding-right: 2px;
    border: 1px solid #2424c8;
    border-bottom: 1px solid #8080ff;
}
.lots{
    display: flex;
    width: 97px;
    height: 20px;
    background-color: #fff;
    border: 1px solid #aaa;
    color: #000;
}
.lots span{
    flex: 1;
    text-align: right;
    padding-right: 4px;
    line-height: 17px;
}
.arrow{
    display: flex;
    align-items: center;
    justify-content: center;
    width: 19px;
    background-color: #f0f0f0;
    border-right: 1px solid #aaa;
}
.arrow.up{
    border-right: none;
    border-left: 1px solid #aaa;
}
.arrow::after{
    content: "";
    border: 3px solid transparent;
    border-top-color: #000;
    border-bottom: none;
}
.arrow.up::after{
    transform: scaleY(-1);
}
.quote{
    display: flex;
    align-items: flex-end;
    width: 96px;
    height: 34px;
    padding-left: 13px;
    background: linear-gradient(#2c2cdc, #0000a8);
    border: 1px solid #0000a0;
}
.quote small{
    font-size: 12px;
    font-weight: 600;
    line-height: 20px;
    width: 28px;
}
.quote strong{
    font-size: 28px;
    font-weight: normal;
    line-height: 32px;
    letter-spacing: 0;
    width: 36px;
}
.quote sup{
    font-size: 12px;
    font-weight: 600;
    align-self: flex-start;
    line-height: 14px;
}

/* EnigmaEA panel, floats over the chart */
.ea-panel{
    position: absolute;
    left: 2380px;
    top: 33px;
    width: 120px;
    font-family: "Liberation Sans", Arial, sans-serif;
    letter-spacing: 0;
    text-align: center;
}
.ea-info{
    height: 200px;
    background-color: #f0f0f0;
    border: 2px solid #c8c8c8;
    border-top-color: #646464;
    border-left-color: #646464;
    padding-top: 7px;
    padding-right: 3px;
}
.ea-info .price{
    color: #f00;
    font-size: 19.5px;
    line-height: 24px;
}
.ea-info .timer{
    display: flex;
    justify-content: center;
    gap: 22px;
    color: #008000;
    font-size: 16px;
    line-height: 23px;
}
.range{
    font-size: 10.8px;
    line-height: 28px;
}
.count{
    font-size: 14.5px;
    line-height: 29px;
}
.total{
    font-size: 14.5px;
    line-height: 18px;
}
.sum{
    font-size: 11.7px;
    line-height: 28px;
}
.sum.small{
    font-size: 10.8px;
    line-height: 17px;
}
.next{
    font-size: 11.6px;
    line-height: 20px;
}
.ea-btns{
    display: grid;
    grid-template-columns: 60px 60px;
    grid-auto-rows: 30px;
    line-height: 31px;
    font-size: 13.2px;
    color: #fff;
}
.ea-btns span{
    background-color: #808080;
    border-radius: 1px;
    padding-right: 3px;
}
.ea-btns .buy{
    background-color: #0000ff;
}
.ea-btns .sell{
    background-color: #ff0000;
}
.ea-btns .close-all, .ea-btns .full{
    grid-column: span 2;
}
.ea-btns .close-all{
    background-color: #ffa500;
    font-size: 15.5px;
}
.ea-btns .wait{
    font-size: 10.4px;
}

/* chart tabs */
.chart-tabs{
    display: flex;
    height: 26px;
    border-top: 2px solid #fff;
    padding-left: 1px;
}
.chart-tabs span{
    height: 19px;
    width: 98px;
    border-top: 1px solid #000;
    text-align: center;
    line-height: 17px;
    color: #7a7a7a;
    padding-left: 4px;
}
.chart-tabs .active{
    width: 84px;
    background-color: #fff;
    color: #000;
    border: 1px solid #000;
    border-top-color: #fff;
    border-right-width: 2px;
    border-bottom-width: 2px;
    padding: 0;
}
.chart-tabs svg{
    flex: 1;
    height: 20px;
    padding: 6px 0 5px 2345px;
    border-top: 1px solid #000;
    border-bottom: 1px solid #fff;
}

/* terminal */
.terminal{
    display: flex;
    height: 69px;
    border-bottom: 1px solid #fff;
}
.terminal-side{
    width: 15px;
    text-align: center;
}
.terminal-side i{
    display: block;
    font: bold 13px/10px "Liberation Sans", sans-serif;
    height: 13px;
}
.terminal-side span{
    display: block;
    width: 13px;
    height: 55px;
    margin-left: 1px;
    background-color: #c9dcef;
    writing-mode: vertical-rl;
    transform: rotate(180deg);
    font-size: 11px;
    line-height: 13px;
    letter-spacing: 0;
}
.terminal-main{
    flex: 1;
}
.orders{
    position: relative;
    height: 48px;
    background-color: #fff;
    border-top: 1px solid #8a8a8a;
    border-left: 1px solid #8a8a8a;
    border-bottom: 1px solid #000;
    margin-right: 4px;
}
.orders-row{
    display: grid;
    grid-template-columns: 249px 346px 173px 134px 173px 192px 193px 191px 193px 191px 192px 296px;
    height: 20px;
    border-bottom: 1px solid #c4c4c4;
    line-height: 18px;
    text-align: right;
}
.orders-row.head{
    height: 25px;
    line-height: 24px;
}
.orders-row span{
    border-right: 1px solid #c8c8c8;
    padding-right: 3px;
}
.orders-row.head span{
    border-color: #e5e5e5;
    padding-right: 5px;
}
.orders-row .first{
    text-align: left;
    padding-left: 6px;
}
.orders-row .first em{
    color: #888;
    font-size: 9px;
    margin-left: 9px;
}
.orders-row .first svg{
    width: 14px;
    height: 16px;
    margin: 1px 5px 0 -3px;
    vertical-align: top;
}
.del{
    display: inline-block;
    width: 21px;
    text-align: center;
    color: #999;
    font: bold 15px/15px "Liberation Sans", sans-serif;
    padding-left: 6px;
}
.scroll{
    position: absolute;
    right: 0;
    top: 0;
    width: 18px;
    height: 45px;
    background-color: #f0f0f0;
}
.terminal-tabs{
    display: flex;
    padding-left: 3px;
}
.terminal-tabs span{
    position: relative;
    height: 19px;
    padding-left: 10px;
    line-height: 18px;
    color: #6e6e6e;
    white-space: nowrap;
}
.terminal-tabs span::after{
    content: "";
    position: absolute;
    right: 0;
    top: 4px;
    width: 1px;
    height: 12px;
    background-color: #6e6e6e;
}
.terminal-tabs .active{
    margin-top: -1px;
    height: 20px;
    background-color: #fff;
    color: #000;
    border: 1px solid #000;
    border-top: none;
    border-right-width: 2px;
    border-bottom-width: 2px;
    padding-left: 9px;
}
.terminal-tabs .active::after{
    display: none;
}
.terminal-tabs sub{
    color: #f22;
    font: bold 9px/8px "Noto Sans", sans-serif;
    letter-spacing: -0.3px;
    margin-left: 2px;
    vertical-align: -4px;
}

/* status */
.status-bar{
    display: flex;
    align-items: center;
    flex: 1;
    margin-top: 2px;
    border-top: 1px solid #a0a0a0;
    padding-top: 2px;
    line-height: 19px;
}
.status-bar span{
    height: 19px;
    padding-left: 5px;
    border-left: 1px solid #a0a0a0;
    white-space: nowrap;
}
.status-bar .help{
    width: 1866px;
    padding-left: 2px;
    border-left: none;
}
.status-bar .profile{ width: 117px; }
.status-bar .time{
    width: 101px;
    letter-spacing: -0.45px;
}
.status-bar .o{ width: 71px; }
.status-bar .h{ width: 71px; }
.status-bar .l{ width: 68px; }
.status-bar .c{ width: 71px; }
.status-bar .v{ width: 66px; }
.status-bar .net{
    letter-spacing: -0.55px;
}
.status-bar .net svg{
    width: 24px;
    height: 14px;
    margin: 3px 4px 0 0;
    vertical-align: top;
    shape-rendering: crispEdges;
}
```
